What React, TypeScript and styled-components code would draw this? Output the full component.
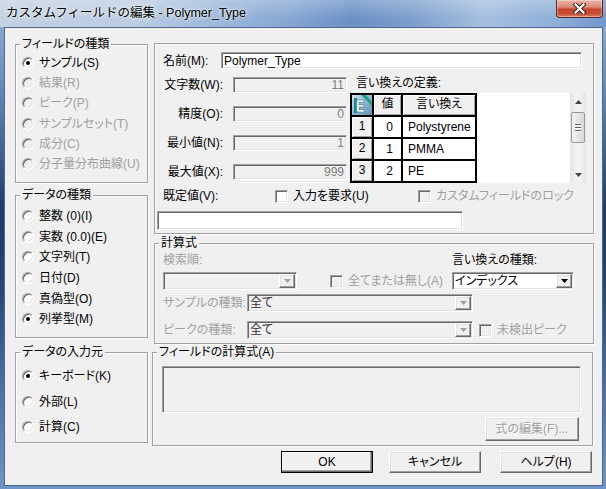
import React from "react";
import styled, { createGlobalStyle, css } from "styled-components";

const GlobalStyle = createGlobalStyle`
  * { box-sizing: border-box; }
  html, body { margin: 0; padding: 0; background: #f0f0f0; }
  body {
    width: 606px;
    height: 489px;
    overflow: hidden;
    font-family: "Liberation Sans", "Noto Sans CJK JP", sans-serif;
    font-feature-settings: "palt";
    font-size: 12px;
    line-height: 14px;
    color: #000;
    white-space: nowrap;
  }
`;

const sunken = css`
  border: 1px solid;
  border-color: #a0a0a0 #fff #fff #a0a0a0;
  box-shadow: inset 1px 1px 0 #696969, inset -1px -1px 0 #e3e3e3;
`;

const raised = css`
  border: 1px solid;
  border-color: #fff #696969 #696969 #fff;
  box-shadow: inset -1px -1px 0 #a0a0a0, inset 1px 1px 0 #e3e3e3;
`;

const Window = styled.div`
  width: 606px;
  height: 489px;
  display: flex;
  flex-direction: column;
`;

const TitleBar = styled.div`
  height: 27px;
  flex: none;
  display: flex;
  justify-content: space-between;
  align-items: flex-start;
  background: linear-gradient(180deg, rgba(255, 255, 255, 0.25), rgba(255, 255, 255, 0) 70%),
    linear-gradient(90deg, #c2d1e3 0%, #bccde2 22%, #9cb7da 36%, #86a6d2 48%, #6a90c6 58%, #7d9fcd 68%, #a5bfe0 80%, #8eaed8 92%, #7098cc 100%);
`;

const Title = styled.div`
  padding: 6px 0 0 6px;
  font-size: 12.5px;
  line-height: 14px;
  font-feature-settings: normal;
  text-shadow: 0 0 6px rgba(255, 255, 255, 0.9), 0 0 2px rgba(255, 255, 255, 0.8);
`;

const CloseButton = styled.div`
  width: 47px;
  height: 18px;
  margin-right: 3px;
  border: 1px solid #5c2a22;
  border-top: none;
  border-radius: 0 0 4px 4px;
  background: linear-gradient(180deg, #eab3a6 0%, #dd8d79 40%, #c8452b 55%, #c64e35 80%, #dc7f63 100%);
  box-shadow: inset 0 0 0 1px rgba(255, 255, 255, 0.35);
  display: flex;
  align-items: center;
  justify-content: center;
`;

const Frame = styled.div`
  flex: 1;
  display: flex;
  padding: 0 3px 3px 4px;
  background: linear-gradient(180deg, #86a7d3 0%, #5d84bb 15%, #1d3a6a 40%, #23447a 55%, #4b74ad 80%, #6f95c8 100%);
`;

const Client = styled.div`
  flex: 1;
  display: flex;
  flex-direction: column;
  background: #f0f0f0;
  border: 1px solid #50678a;
  padding: 15px 8px 0 10px;
`;

const TopSection = styled.div`
  height: 301px;
  display: flex;
  gap: 6px;
`;

const LeftCol = styled.div`
  width: 133px;
  display: flex;
  flex-direction: column;
  gap: 12px;
  padding-top: 1px;
`;

const RightCol = styled.div`
  width: 440px;
  display: flex;
  flex-direction: column;
  gap: 9px;
`;

const Group = styled.div<{ $h: number; $w?: number }>`
  flex: none;
  height: ${(p) => p.$h}px;
  ${(p) => (p.$w ? `width: ${p.$w}px;` : "")}
  border: 1px solid #a0a0a0;
  box-shadow: inset 1px 1px 0 #fff, 1px 1px 0 #fff;
  display: flex;
  flex-direction: column;
`;

const Legend = styled.div`
  align-self: flex-start;
  margin: -7px 0 0 4px;
  padding: 0 2px;
  height: 13px;
  line-height: 13px;
  background: #f0f0f0;
`;

const RadioList = styled.div<{ $top: number; $gap?: number }>`
  display: flex;
  flex-direction: column;
  margin-top: ${(p) => p.$top}px;
  gap: ${(p) => p.$gap ?? 0}px;
`;

const RadioRow = styled.div<{ $h: number; $disabled?: boolean }>`
  height: ${(p) => p.$h}px;
  display: flex;
  align-items: center;
  gap: 5px;
  padding-left: 6px;
  color: ${(p) => (p.$disabled ? "#a0a0a0" : "#000")};
`;

const RadioDot = styled.span<{ $checked?: boolean; $disabled?: boolean }>`
  flex: none;
  width: 12px;
  height: 12px;
  border-radius: 50%;
  border: 1px solid;
  border-color: #a0a0a0 #fff #fff #a0a0a0;
  box-shadow: inset 1px 1px 0 #696969, inset -1px -1px 0 #e3e3e3;
  background: ${(p) => (p.$disabled ? "#f0f0f0" : "#fff")};
  display: flex;
  align-items: center;
  justify-content: center;
  &::after {
    content: "";
    width: 4px;
    height: 4px;
    border-radius: 50%;
    background: #000;
    display: ${(p) => (p.$checked ? "block" : "none")};
  }
`;

const CheckItem = styled.div<{ $w?: number; $ml?: number; $disabled?: boolean }>`
  display: flex;
  align-items: center;
  gap: 5px;
  ${(p) => (p.$w ? `width: ${p.$w}px;` : "")}
  margin-left: ${(p) => p.$ml ?? 0}px;
  color: ${(p) => (p.$disabled ? "#a0a0a0" : "#000")};
`;

const CheckBox = styled.span<{ $disabled?: boolean }>`
  flex: none;
  width: 13px;
  height: 13px;
  ${sunken};
  background: ${(p) => (p.$disabled ? "#f0f0f0" : "#fff")};
`;

const Label = styled.div<{ $w?: number; $disabled?: boolean; $right?: boolean }>`
  flex: none;
  ${(p) => (p.$w ? `width: ${p.$w}px;` : "")}
  text-align: ${(p) => (p.$right ? "right" : "left")};
  color: ${(p) => (p.$disabled ? "#a0a0a0" : "#000")};
`;

const Edit = styled.div<{ $w?: number; $h: number; $disabled?: boolean; $right?: boolean }>`
  ${(p) => (p.$w ? `width: ${p.$w}px; flex: none;` : "flex: 1;")}
  height: ${(p) => p.$h}px;
  ${sunken};
  background: ${(p) => (p.$disabled ? "#f0f0f0" : "#fff")};
  color: ${(p) => (p.$disabled ? "#7f7f7f" : "#000")};
  padding: 0 2px 0 2px;
  display: flex;
  align-items: center;
  justify-content: ${(p) => (p.$right ? "flex-end" : "flex-start")};
`;

/* top right panel */
const Panel = styled(Group)`
  padding: 8px 7px 3px 2px;
`;

const NameRow = styled.div`
  height: 17px;
  display: flex;
  align-items: center;
  padding-left: 6px;
  margin-right: 4px;
`;

const MidSection = styled.div`
  height: 108px;
  margin-top: 6px;
  padding-left: 6px;
  display: flex;
`;

const FieldsCol = styled.div`
  width: 184px;
  padding-top: 2px;
  display: flex;
  flex-direction: column;
  gap: 13px;
`;

const FieldRow = styled.div`
  height: 16px;
  display: grid;
  grid-template-columns: 60px 114px;
  column-gap: 10px;
  align-items: center;
`;

const MapCol = styled.div`
  width: 236px;
  margin-left: 3px;
  display: flex;
  flex-direction: column;
`;

const MapLabel = styled.div`
  height: 18px;
  padding: 1px 0 0 6px;
`;

const TableBox = styled.div`
  height: 90px;
  display: flex;
  background: #fff;
`;

const Grid = styled.div`
  flex: none;
  width: 127px;
  height: 90px;
  display: grid;
  grid-template-columns: 20px 27px 72px;
  grid-auto-rows: 20px;
  gap: 2px;
  padding: 2px;
  background: #000;
`;

const HeadCell = styled.div`
  background: #f0f0f0;
  box-shadow: inset 1px 1px 0 #fff, inset -1px -1px 0 #a0a0a0;
  display: flex;
  align-items: center;
  justify-content: center;
  padding-bottom: 2px;
`;

const IconCell = styled.div`
  display: flex;
`;

const DataCell = styled.div<{ $right?: boolean }>`
  background: #fff;
  display: flex;
  align-items: center;
  justify-content: ${(p) => (p.$right ? "flex-end" : "flex-start")};
  padding: ${(p) => (p.$right ? "0 8px 0 0" : "0 0 0 5px")};
`;

const GridSpacer = styled.div`
  flex: 1;
`;

const ScrollBar = styled.div`
  flex: none;
  width: 16px;
  display: flex;
  flex-direction: column;
  align-items: center;
  background: linear-gradient(90deg, #e4e4e4 0%, #f2f2f2 40%, #f2f2f2 60%, #e4e4e4 100%);
`;

const ScrollArrow = styled.div`
  width: 16px;
  height: 17px;
  display: flex;
  align-items: center;
  justify-content: center;
`;

const ScrollThumb = styled.div`
  width: 14px;
  height: 31px;
  margin-top: 2px;
  border: 1px solid #9a9a9a;
  border-radius: 2px;
  background: linear-gradient(90deg, #f4f4f4, #e6e6e6 50%, #d8d8d8);
  display: flex;
  flex-direction: column;
  align-items: center;
  justify-content: center;
  gap: 1px;
`;

const Grip = styled.span`
  width: 6px;
  height: 1px;
  background: #606060;
  box-shadow: 0 1px 0 #fff;
  margin-bottom: 1px;
`;

const ScrollFill = styled.div`
  flex: 1;
`;

const CheckRow = styled.div`
  height: 16px;
  margin-top: 5px;
  padding-left: 6px;
  display: flex;
  align-items: center;
`;

const DefaultInput = styled(Edit)`
  margin-top: 7px;
`;

/* calc group */
const CalcBody = styled.div`
  padding-left: 8px;
  display: flex;
  flex-direction: column;
`;

const CalcRow = styled.div<{ $top: number; $h: number }>`
  height: ${(p) => p.$h}px;
  margin-top: ${(p) => p.$top}px;
  display: flex;
  align-items: center;
`;

const ComboBox = styled.div<{ $w: number; $disabled?: boolean }>`
  flex: none;
  width: ${(p) => p.$w}px;
  height: 18px;
  ${sunken};
  padding: 1px;
  background: ${(p) => (p.$disabled ? "#f0f0f0" : "#fff")};
  display: flex;
`;

const ComboText = styled.div<{ $disabled?: boolean }>`
  flex: 1;
  padding-left: 1px;
  line-height: 14px;
  color: ${(p) => (p.$disabled ? "#333" : "#000")};
`;

const DropButton = styled.div`
  width: 16px;
  height: 14px;
  background: #f0f0f0;
  ${raised};
  display: flex;
  align-items: center;
  justify-content: center;
`;

/* bottom */
const BottomSection = styled.div`
  margin-top: 8px;
  display: flex;
  gap: 4px;
`;

const Memo = styled.div`
  height: 47px;
  margin: 7px 11px 0 9px;
  ${sunken};
  background: #f0f0f0;
`;

const Button = styled.div<{ $w: number; $h: number; $default?: boolean; $disabled?: boolean }>`
  flex: none;
  width: ${(p) => p.$w}px;
  height: ${(p) => p.$h}px;
  background: #f0f0f0;
  ${(p) =>
    p.$default
      ? css`
          border: 1px solid #000;
          box-shadow: inset -1px -1px 0 #696969, inset -2px -2px 0 #a0a0a0, inset 1px 1px 0 #fff;
        `
      : raised}
  display: flex;
  align-items: center;
  justify-content: center;
  padding-bottom: 1px;
  color: ${(p) => (p.$disabled ? "#a0a0a0" : "#000")};
  text-shadow: ${(p) => (p.$disabled ? "1px 1px 0 #fff" : "none")};
`;

const EditFormulaButton = styled(Button)`
  align-self: flex-end;
  margin: 4px 13px 0 0;
`;

const ButtonRow = styled.div`
  height: 22px;
  margin-top: 5px;
  padding-right: 2px;
  display: flex;
  justify-content: flex-end;
`;

const ButtonGap = styled.div<{ $w: number }>`
  width: ${(p) => p.$w}px;
`;

const Arrow = ({ color = "#000", up = false }: { color?: string; up?: boolean }) => (
  <svg width="7" height="4" viewBox="0 0 7 4">
    <polygon points={up ? "0,4 7,4 3.5,0" : "0,0 7,0 3.5,4"} fill={color} />
  </svg>
);

const CloseIcon = () => (
  <svg width="13" height="11" viewBox="0 0 13 11">
    <path d="M2.5 1.5 L10.5 9.5 M10.5 1.5 L2.5 9.5" stroke="#3b2420" strokeWidth="4.2" strokeLinecap="square" />
    <path d="M2.5 1.5 L10.5 9.5 M10.5 1.5 L2.5 9.5" stroke="#fff" strokeWidth="2.2" strokeLinecap="square" />
  </svg>
);

const EIcon = () => (
  <svg width="20" height="20" viewBox="0 0 20 20">
    <defs>
      <linearGradient id="eicon" x1="0" y1="0" x2="1" y2="1">
        <stop offset="0" stopColor="#cfe0ec" />
        <stop offset="1" stopColor="#5e8fb6" />
      </linearGradient>
    </defs>
    <rect width="20" height="20" fill="url(#eicon)" />
    <path d="M9 0 L14 0 L20 7 L20 11 Z" fill="#1d9c86" />
    <rect x="2" y="3" width="3" height="15" fill="#1a8a88" />
    <text x="3" y="17" fontFamily="DejaVu Sans, sans-serif" fontWeight="bold" fontSize="15" fill="#f4fbff" stroke="#1a6f78" strokeWidth="0.6">
      E
    </text>
  </svg>
);

const Radio = ({ label, h, checked, disabled }: { label: string; h: number; checked?: boolean; disabled?: boolean }) => (
  <RadioRow $h={h} $disabled={disabled}>
    <RadioDot $checked={checked} $disabled={disabled} />
    <span>{label}</span>
  </RadioRow>
);

const Check = ({ label, w, ml, disabled }: { label: string; w?: number; ml?: number; disabled?: boolean }) => (
  <CheckItem $w={w} $ml={ml} $disabled={disabled}>
    <CheckBox $disabled={disabled} />
    <span>{label}</span>
  </CheckItem>
);

const Combo = ({ w, value, disabled }: { w: number; value?: string; disabled?: boolean }) => (
  <ComboBox $w={w} $disabled={disabled}>
    <ComboText $disabled={disabled}>{value}</ComboText>
    <DropButton>
      <Arrow color={disabled ? "#a0a0a0" : "#000"} />
    </DropButton>
  </ComboBox>
);

const fieldKinds = [
  { label: "サンプル(S)", checked: true },
  { label: "結果(R)", disabled: true },
  { label: "ピーク(P)", disabled: true },
  { label: "サンプルセット(T)", disabled: true },
  { label: "成分(C)", disabled: true },
  { label: "分子量分布曲線(U)", disabled: true },
];

const dataKinds = [
  { label: "整数 (0)(I)" },
  { label: "実数 (0.0)(E)" },
  { label: "文字列(T)" },
  { label: "日付(D)" },
  { label: "真偽型(O)" },
  { label: "列挙型(M)", checked: true },
];

const sources = [
  { label: "キーボード(K)", checked: true },
  { label: "外部(L)" },
  { label: "計算(C)" },
];

const numberFields = [
  { label: "文字数(W):", value: "11" },
  { label: "精度(O):", value: "0" },
  { label: "最小値(N):", value: "1" },
  { label: "最大値(X):", value: "999" },
];

const mapping = [
  { n: "1", v: "0", text: "Polystyrene" },
  { n: "2", v: "1", text: "PMMA" },
  { n: "3", v: "2", text: "PE" },
];

export default function App() {
  return (
    <>
      <GlobalStyle />
      <Window>
        <TitleBar>
          <Title>カスタムフィールドの編集 - Polymer_Type</Title>
          <CloseButton>
            <CloseIcon />
          </CloseButton>
        </TitleBar>
        <Frame>
          <Client>
            <TopSection>
              <LeftCol>
                <Group $h={139}>
                  <Legend>フィールドの種類</Legend>
                  <RadioList $top={2}>
                    {fieldKinds.map((r) => (
                      <Radio key={r.label} h={20.2} {...r} />
                    ))}
                  </RadioList>
                </Group>
                <Group $h={143}>
                  <Legend>データの種類</Legend>
                  <RadioList $top={4}>
                    {dataKinds.map((r) => (
                      <Radio key={r.label} h={20.6} {...r} />
                    ))}
                  </RadioList>
                </Group>
              </LeftCol>
              <RightCol>
                <Panel $h={191}>
                  <NameRow>
                    <Label $w={58}>名前(M):</Label>
                    <Edit $h={17}>Polymer_Type</Edit>
                  </NameRow>
                  <MidSection>
                    <FieldsCol>
                      {numberFields.map((f) => (
                        <FieldRow key={f.label}>
                          <Label $right>{f.label}</Label>
                          <Edit $h={16} $disabled $right>
                            {f.value}
                          </Edit>
                        </FieldRow>
                      ))}
                    </FieldsCol>
                    <MapCol>
                      <MapLabel>言い換えの定義:</MapLabel>
                      <TableBox>
                        <Grid>
                          <IconCell>
                            <EIcon />
                          </IconCell>
                          <HeadCell>値</HeadCell>
                          <HeadCell>言い換え</HeadCell>
                          {mapping.map((m) => (
                            <React.Fragment key={m.n}>
                              <HeadCell>{m.n}</HeadCell>
                              <DataCell $right>{m.v}</DataCell>
                              <DataCell>{m.text}</DataCell>
                            </React.Fragment>
                          ))}
                        </Grid>
                        <GridSpacer />
                        <ScrollBar>
                          <ScrollArrow>
                            <Arrow up color="#444" />
                          </ScrollArrow>
                          <ScrollThumb>
                            <Grip />
                            <Grip />
                            <Grip />
                          </ScrollThumb>
                          <ScrollFill />
                          <ScrollArrow>
                            <Arrow color="#444" />
                          </ScrollArrow>
                        </ScrollBar>
                      </TableBox>
                    </MapCol>
                  </MidSection>
                  <CheckRow>
                    <Label $w={112}>既定値(V):</Label>
                    <Check label="入力を要求(U)" w={143} />
                    <Check label="カスタムフィールドのロック" disabled />
                  </CheckRow>
                  <DefaultInput $h={19} $w={306} />
                </Panel>
                <Group $h={101}>
                  <Legend>計算式</Legend>
                  <CalcBody>
                    <CalcRow $top={3} $h={14}>
                      <Label $w={289} $disabled>
                        検索順:
                      </Label>
                      <Label>言い換えの種類:</Label>
                    </CalcRow>
                    <CalcRow $top={5} $h={18}>
                      <Combo w={134} disabled />
                      <Check label="全てまたは無し(A)" w={122} ml={33} disabled />
                      <Combo w={122} value="インデックス" />
                    </CalcRow>
                    <CalcRow $top={4} $h={18}>
                      <Label $w={84} $disabled>
                        サンプルの種類:
                      </Label>
                      <Combo w={226} value="全て" disabled />
                    </CalcRow>
                    <CalcRow $top={9} $h={18}>
                      <Label $w={84} $disabled>
                        ピークの種類:
                      </Label>
                      <Combo w={226} value="全て" disabled />
                      <Check label="未検出ピーク" ml={6} disabled />
                    </CalcRow>
                  </CalcBody>
                </Group>
              </RightCol>
            </TopSection>
            <BottomSection>
              <Group $h={91} $w={133}>
                <Legend>データの入力元</Legend>
                <RadioList $top={7} $gap={5.5}>
                  {sources.map((r) => (
                    <Radio key={r.label} h={20} {...r} />
                  ))}
                </RadioList>
              </Group>
              <Group $h={94} $w={441}>
                <Legend>フィールドの計算式(A)</Legend>
                <Memo />
                <EditFormulaButton $w={94} $h={24} $disabled>
                  式の編集(F)...
                </EditFormulaButton>
              </Group>
            </BottomSection>
            <ButtonRow>
              <Button $w={92} $h={22} $default>
                OK
              </Button>
              <ButtonGap $w={16} />
              <Button $w={92} $h={22}>
                キャンセル
              </Button>
              <ButtonGap $w={19} />
              <Button $w={92} $h={22}>
                ヘルプ(H)
              </Button>
            </ButtonRow>
          </Client>
        </Frame>
      </Window>
    </>
  );
}
